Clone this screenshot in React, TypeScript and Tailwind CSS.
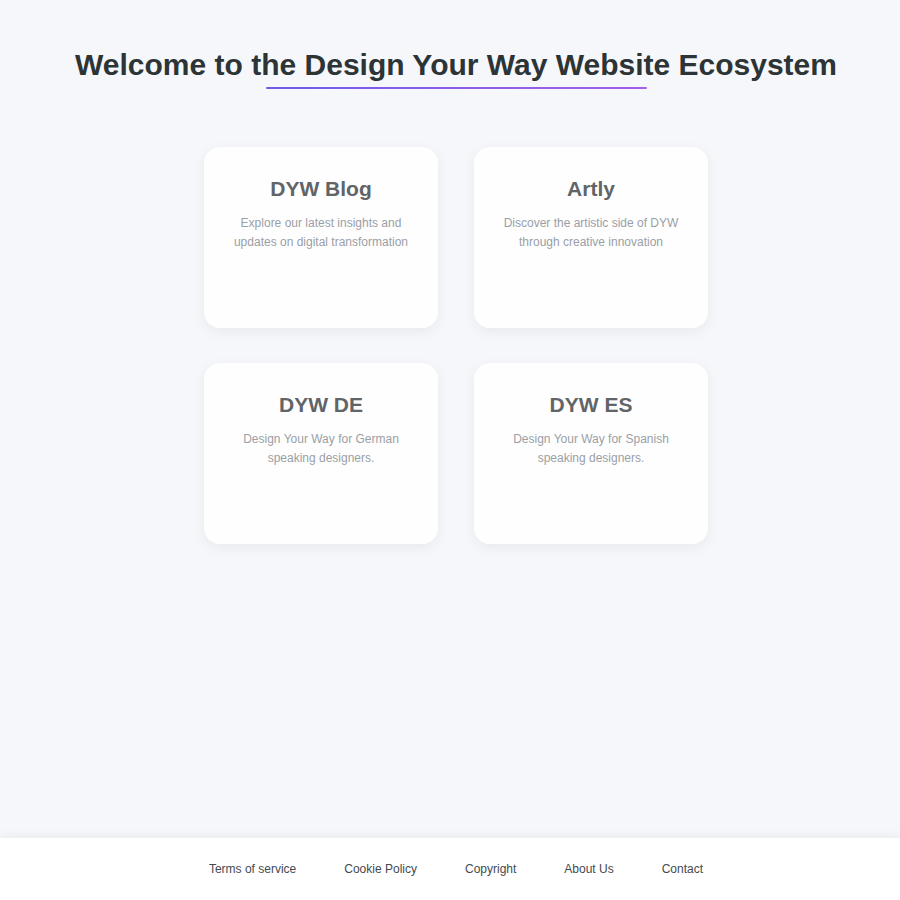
import React from 'react';

const sites = [
  { title: 'DYW Blog', text: 'Explore our latest insights and updates on digital transformation' },
  { title: 'Artly', text: 'Discover the artistic side of DYW through creative innovation' },
  { title: 'DYW DE', text: 'Design Your Way for German speaking designers.' },
  { title: 'DYW ES', text: 'Design Your Way for Spanish speaking designers.' },
];

const links = ['Terms of service', 'Cookie Policy', 'Copyright', 'About Us', 'Contact'];

const App: React.FC = () => {
  return (
    <div
      className="min-h-screen flex flex-col bg-[#f5f7fb]"
      style={{ fontFamily: '"Liberation Sans", Arial, sans-serif' }}
    >
      <main className="flex-1 pl-3 pt-[46px]">
        <div className="flex flex-col items-center">
          <h1 className="text-[30px] leading-[38px] font-bold text-[#2d3436]">
            Welcome to the Design Your Way Website Ecosystem
          </h1>
          <div className="mt-[3px] h-0.5 w-[381px] rounded-full bg-gradient-to-r from-[#6c5ce7] to-[#a55eea]" />
        </div>

        {/* site cards */}
        <div className="mx-auto mt-[58px] grid w-[504px] grid-cols-2 gap-x-9 gap-y-[35px]">
          {sites.map((site) => (
            <div
              key={site.title}
              className="h-[181px] rounded-2xl bg-white/90 px-7 pt-[28px] text-center shadow-[0_4px_14px_rgba(0,0,0,0.06)]"
            >
              <h3 className="text-[21px] leading-[28px] font-bold text-[#616568]">{site.title}</h3>
              <p className="mt-[11px] text-[12px] leading-[19px] text-[#9a9fa5]">{site.text}</p>
            </div>
          ))}
        </div>
      </main>

      <footer className="h-[62px] bg-white shadow-[0_-2px_10px_rgba(0,0,0,0.05)] pl-3 flex items-center justify-center gap-12">
        {links.map((l) => (
          <a key={l} href="#" className="text-[12px] text-[#444a4f]">
            {l}
          </a>
        ))}
      </footer>
    </div>
  );
};

export default App;
